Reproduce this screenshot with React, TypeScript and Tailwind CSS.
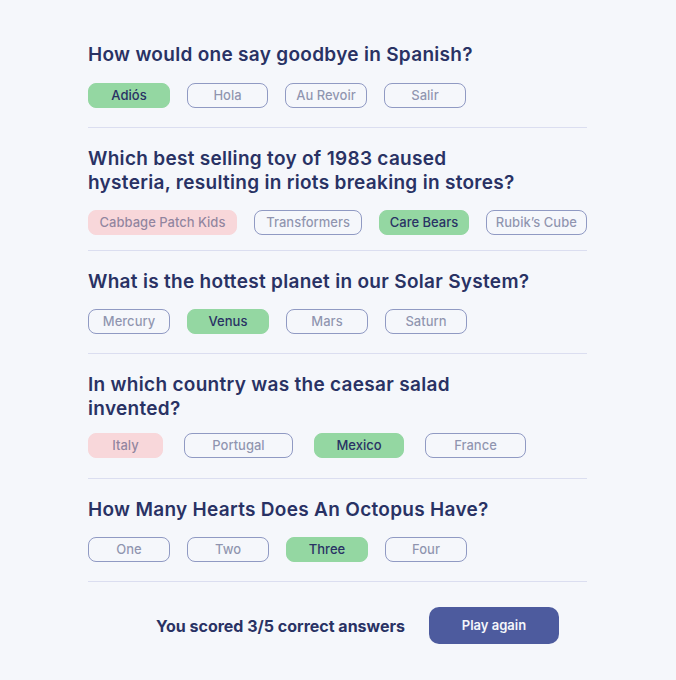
import React from "react";

type Ans = { t: string; w: string; s: "correct" | "wrong" | "none" };
type Q = { q: string[]; answers: Ans[]; mt: string; mb: string; gap: string };

const data: Q[] = [
  {
    q: ["How would one say goodbye in Spanish?"],
    mt: "mt-[16px]",
    mb: "mt-[19px]",
    gap: "gap-x-[17px]",
    answers: [
      { t: "Adiós", w: "w-[82px]", s: "correct" },
      { t: "Hola", w: "w-[81px]", s: "none" },
      { t: "Au Revoir", w: "w-[82px]", s: "none" },
      { t: "Salir", w: "w-[82px]", s: "none" },
    ],
  },
  {
    q: ["Which best selling toy of 1983 caused", "hysteria, resulting in riots breaking in stores?"],
    mt: "mt-[15px]",
    mb: "mt-[15px]",
    gap: "gap-x-[17px]",
    answers: [
      { t: "Cabbage Patch Kids", w: "w-[150px]", s: "wrong" },
      { t: "Transformers", w: "w-[109px]", s: "none" },
      { t: "Care Bears", w: "w-[90px]", s: "correct" },
      { t: "Rubik’s Cube", w: "w-[102px]", s: "none" },
    ],
  },
  {
    q: ["What is the hottest planet in our Solar System?"],
    mt: "mt-[15px]",
    mb: "mt-[19px]",
    gap: "gap-x-[17px]",
    answers: [
      { t: "Mercury", w: "w-[82px]", s: "none" },
      { t: "Venus", w: "w-[82px]", s: "correct" },
      { t: "Mars", w: "w-[82px]", s: "none" },
      { t: "Saturn", w: "w-[82px]", s: "none" },
    ],
  },
  {
    q: ["In which country was the caesar salad", "invented?"],
    mt: "mt-[12px]",
    mb: "mt-[20px]",
    gap: "gap-x-[21px]",
    answers: [
      { t: "Italy", w: "w-[75px]", s: "wrong" },
      { t: "Portugal", w: "w-[109px]", s: "none" },
      { t: "Mexico", w: "w-[90px]", s: "correct" },
      { t: "France", w: "w-[101px]", s: "none" },
    ],
  },
  {
    q: ["How Many Hearts Does An Octopus Have?"],
    mt: "mt-[15px]",
    mb: "mt-[19px]",
    gap: "gap-x-[17px]",
    answers: [
      { t: "One", w: "w-[82px]", s: "none" },
      { t: "Two", w: "w-[82px]", s: "none" },
      { t: "Three", w: "w-[82px]", s: "correct" },
      { t: "Four", w: "w-[82px]", s: "none" },
    ],
  },
];

function Answer({ a }: { a: Ans }) {
  const base =
    "h-[25px] rounded-[8px] flex items-center justify-center text-[13px] font-medium leading-none";
  if (a.s === "correct")
    return (
      <div className={`${base} ${a.w} bg-[#94d7a2] text-[#293264] border border-[#94d7a2]`}>{a.t}</div>
    );
  if (a.s === "wrong")
    return (
      <div className={`${base} ${a.w} bg-[#f8d7da] text-[#293264]/50 border border-[#f8d7da]`}>{a.t}</div>
    );
  return (
    <div className={`${base} ${a.w} border border-[#4d5b9e]/60 text-[#293264]/50`}>{a.t}</div>
  );
}

export default function App() {
  return (
    <div
      className="min-h-[680px] w-full bg-[#f5f7fb] text-[#293264]"
      style={{ fontFamily: "Inter, 'Noto Sans', sans-serif" }}
    >
      <div className="ml-[88px] w-[499px] pt-[43px]">
        {data.map((q, i) => (
          <div key={i} className={i === 0 ? "" : "pt-[19px]"}>
            <h2 className="text-[19px] font-semibold leading-[24px] tracking-[0.3px]">
              {q.q.map((l, j) => (
                <div key={j}>{l}</div>
              ))}
            </h2>
            <div className={`flex ${q.gap} ${q.mt}`}>
              {q.answers.map((a, k) => (
                <Answer key={k} a={a} />
              ))}
            </div>
            <div className={`${q.mb} h-px bg-[#dbdef0]`} />
          </div>
        ))}
        <div className="mt-[25px] ml-[68px] flex items-center gap-[24px]">
          <span className="text-[16px] font-bold">You scored 3/5 correct answers</span>
          <button className="h-[37px] w-[130px] rounded-[10px] bg-[#4d5b9e] text-[#f5f7fb] text-[13px] font-semibold">
            Play again
          </button>
        </div>
      </div>
    </div>
  );
}
